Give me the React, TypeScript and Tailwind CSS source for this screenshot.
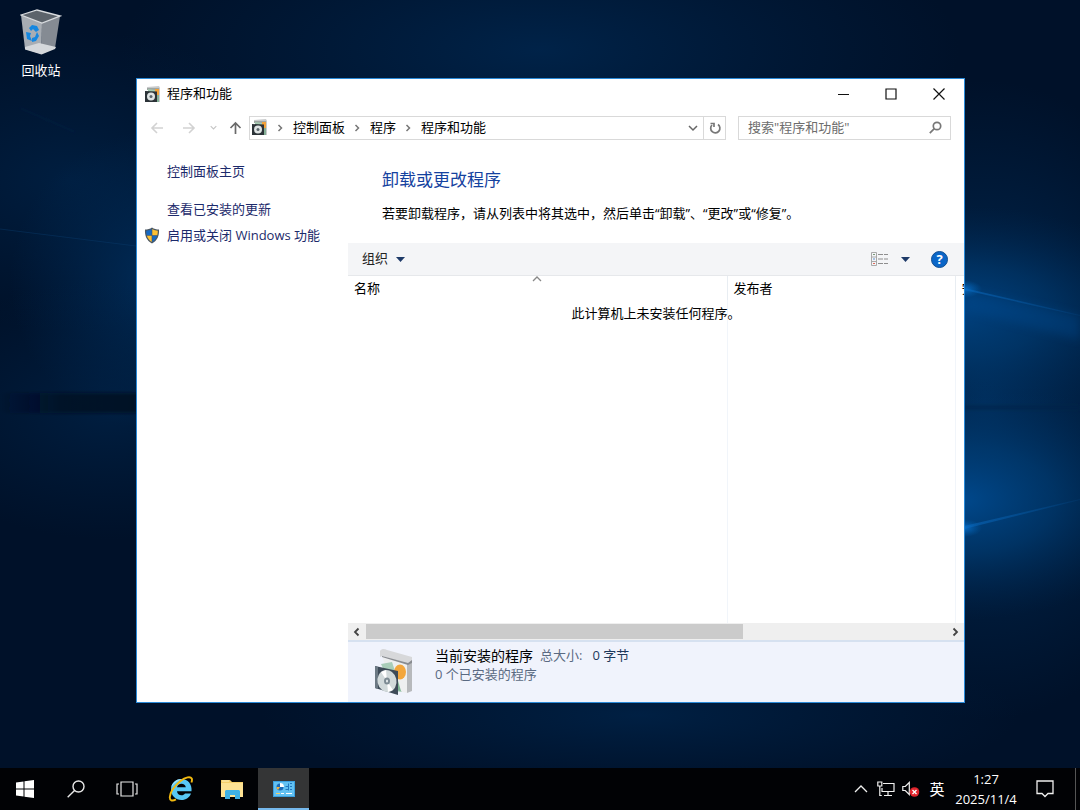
import React from "react";

const ui = "font-['Open_Sans','Noto_Sans_CJK_SC',sans-serif]";

const Wallpaper = () => (
    <svg className="absolute inset-0 w-full h-full" viewBox="0 0 1080 768" preserveAspectRatio="none" aria-hidden="true">
        <defs>
            <radialGradient id="glow">
                <stop offset="0" stopColor="#004f98" />
                <stop offset="0.45" stopColor="#00407a" stopOpacity="0.7" />
                <stop offset="1" stopColor="#002a55" stopOpacity="0" />
            </radialGradient>
            <radialGradient id="haze">
                <stop offset="0" stopColor="#003060" stopOpacity="0.95" />
                <stop offset="1" stopColor="#002a55" stopOpacity="0" />
            </radialGradient>
            <radialGradient id="flare">
                <stop offset="0" stopColor="#0a70cc" stopOpacity="0.9" />
                <stop offset="1" stopColor="#0060b0" stopOpacity="0" />
            </radialGradient>
            <linearGradient id="ray" x1="0" x2="1">
                <stop offset="0" stopColor="#0a68bc" stopOpacity="0.6" />
                <stop offset="1" stopColor="#0a68bc" stopOpacity="0.1" />
            </linearGradient>
            <linearGradient id="band" x1="0" x2="1">
                <stop offset="0" stopColor="#000d22" stopOpacity="0" />
                <stop offset="0.4" stopColor="#000d22" stopOpacity="0.75" />
                <stop offset="1" stopColor="#000d22" stopOpacity="0.85" />
            </linearGradient>
            <filter id="soft" x="-20%" y="-50%" width="140%" height="200%">
                <feGaussianBlur stdDeviation="5" />
            </filter>
            <filter id="edge" x="-5%" y="-50%" width="110%" height="200%">
                <feGaussianBlur stdDeviation="1.500" />
            </filter>
        </defs>
        <rect width="1080" height="768" fill="#001129" />
        <ellipse cx="540" cy="50" rx="420" ry="150" fill="url(#haze)" opacity="0.6" />
        <ellipse cx="70" cy="180" rx="240" ry="150" fill="url(#haze)" opacity="0.45" />
        <ellipse cx="160" cy="280" rx="150" ry="150" fill="url(#haze)" opacity="0.9" />
        <ellipse cx="110" cy="410" rx="210" ry="130" fill="url(#haze)" opacity="0.45" />
        <ellipse cx="640" cy="715" rx="380" ry="80" fill="url(#haze)" opacity="0.5" />
        <ellipse cx="985" cy="400" rx="230" ry="320" fill="url(#haze)" />
        <ellipse cx="950" cy="310" rx="230" ry="105" fill="url(#glow)" opacity="0.7" />
        <ellipse cx="960" cy="500" rx="210" ry="120" fill="url(#glow)" opacity="0.85" />
        <path d="M0 393H150V413H0z" fill="url(#band)" filter="url(#edge)" />
        <path d="M964 405H1080V410H964z" fill="#002247" opacity="0.5" filter="url(#edge)" />
        <path d="M964 290L1080 316V340L964 310z" fill="#00509a" opacity="0.3" filter="url(#soft)" />
        <path d="M964 288L1080 315V316L964 290z" fill="url(#ray)" />
        <path d="M964 526L1080 499V500L964 529z" fill="url(#ray)" />
        <path d="M0 229L136 246" stroke="#0a3f70" strokeOpacity="0.4" fill="none" />
        <path d="M20 108L75 132" stroke="#0a3560" strokeOpacity="0.3" fill="none" filter="url(#edge)" />
        <ellipse cx="964" cy="289" rx="18" ry="9" fill="url(#flare)" />
        <ellipse cx="964" cy="528" rx="18" ry="9" fill="url(#flare)" />
    </svg>
);

const RecycleBin = () => (
    <svg width="42" height="46" viewBox="0 0 42 46" aria-hidden="true">
        <path d="M1 6L17 1l23 6-18 7z" fill="#5c636b" />
        <path d="M1 6l21 8-.5 31L5 40z" fill="#a8adb3" />
        <path d="M40 7l-18 7-.5 31L35 39z" fill="#858b93" />
        <path d="M5 38l14-4 17 4-1 2-13.500 5.500L5 40.500z" fill="#d5d8db" />
        <path d="M1 6L17 1l23 6-18 7z" fill="none" stroke="#d9dcdf" strokeWidth="1.300" />
        <path d="M9 19l3-3 5 1 2 4-3 2-3-3-2 2zM6 23l5 1-1 3 2 5-5-2zM17 23l2 4-3 5-4 1v-4l3-1z" fill="#1587e0" />
    </svg>
);

const ProgramsIcon = ({ size = 17 }: { size?: number }) => (
    <svg width={size} height={size} viewBox="0 0 17 17" aria-hidden="true">
        <path d="M3 1l12-1 1 2v14h-4V4H3z" fill="#c9cbcc" />
        <path d="M3 2h12v2H3z" fill="#9fa6a3" />
        <path d="M4 3l7 1v5H4z" fill="#a4c9b0" />
        <path d="M11 3h4v7h-4z" fill="#f3a23a" />
        <path d="M13 9h2v7h-2z" fill="#84af96" />
        <path d="M1 5l12 .5v10.500L1 16z" fill="#2b3237" />
        <circle cx="7" cy="10.500" r="4" fill="#dfe4e4" />
        <circle cx="7" cy="10.500" r="1.500" fill="#5b666c" />
    </svg>
);

const ProgramsLargeIcon = () => (
    <svg width="42" height="48" viewBox="0 0 42 48" aria-hidden="true">
        <path d="M33 14h5v29l-5 2z" fill="#b7b9bc" />
        <path d="M8 8l25 6v31L20 42z" fill="#eeeff0" />
        <path d="M6 3c2-3 5-2 7-1l25 7v6l-4 1L8 8 6 9z" fill="#d7d8da" />
        <path d="M8 8l26 7 4-3v3l-4 2L8 9z" fill="#888b90" />
        <path d="M7 16l11-2 3 9v13l7 8-8-1z" fill="#a9cdb9" />
        <path d="M22 26l5 17-6-1z" fill="#7fb595" />
        <ellipse cx="26" cy="24" rx="6" ry="7.500" fill="#f3a63c" />
        <path d="M1 18l23 5v24L1 40z" fill="#3e4b58" />
        <path d="M1 18l3 1v22l-3-1z" fill="#6b7883" />
        <ellipse cx="13" cy="33" rx="9.500" ry="11" fill="#d2dadb" transform="rotate(-12 13 33)" />
        <path d="M13 33L7 24l5-2zM13 33l6 9-5 2z" fill="#fff" />
        <ellipse cx="13" cy="33" rx="3" ry="3.500" fill="#7d8b93" />
        <ellipse cx="13" cy="33" rx="1" ry="1.500" fill="#e7ecee" />
    </svg>
);

const Shield = () => (
    <svg width="16" height="17" viewBox="0 0 16 17" aria-hidden="true">
        <path d="M8 .5c2 1.500 4.500 2 7 2 .4 6-1.500 11-7 14C2.500 13.500.6 8.500 1 2.500c2.500 0 5-.5 7-2z" fill="#4b5763" />
        <path d="M7.700 2C6 3 4.200 3.500 2.200 3.700c0 1.600.1 3 .5 4.500h5z" fill="#1569c4" />
        <path d="M8.300 2c1.700 1 3.500 1.500 5.500 1.700 0 1.600-.1 3-.5 4.500h-5z" fill="#fdc033" />
        <path d="M7.700 8.800H2.900c.9 2.700 2.400 4.800 4.800 6.300z" fill="#fdc033" />
        <path d="M8.300 8.800h4.800c-.9 2.700-2.400 4.800-4.800 6.300z" fill="#1569c4" />
    </svg>
);

const Chevron = ({ d, size = 10, color = "#777", width = 1.5 }: { d: string; size?: number; color?: string; width?: number }) => (
    <svg width={size} height={size} viewBox="0 0 10 10" fill="none" stroke={color} strokeWidth={width} aria-hidden="true">
        <path d={d} />
    </svg>
);

const RIGHT = "M3.500 2l3 3-3 3";
const DOWN = "M1 3l4 4 4-4";

const Caret = () => (
    <svg width="9" height="5" viewBox="0 0 9 5" aria-hidden="true">
        <path d="M0 0h9L4.500 5z" fill="#1e3a68" />
    </svg>
);

const crumbs = ["控制面板", "程序", "程序和功能"];

const TitleBar = () => (
    <header className="flex h-[30px] items-center pl-[7px] pr-px">
        <ProgramsIcon />
        <h1 className="ml-1.5 flex-1 text-black">程序和功能</h1>
        <button aria-label="最小化" className="flex h-full w-12 items-center justify-center">
            <svg width="12" height="12" viewBox="0 0 12 12"><path d="M1 6.500h11" stroke="#111" /></svg>
        </button>
        <button aria-label="最大化" className="flex h-full w-12 items-center justify-center">
            <svg width="12" height="12" viewBox="0 0 12 12"><path d="M1 1h10v10H1z" fill="none" stroke="#111" strokeWidth="1.200" /></svg>
        </button>
        <button aria-label="关闭" className="flex h-full w-12 items-center justify-center">
            <svg width="12" height="12" viewBox="0 0 12 12"><path d="M.5.5l11 11m0-11l-11 11" stroke="#111" strokeWidth="1.200" /></svg>
        </button>
    </header>
);

const NavBar = () => (
    <nav className="flex h-[37px] items-center pl-3 pr-[13px]">
        <button aria-label="后退" className="flex w-4 justify-center">
            <svg width="14" height="12" viewBox="0 0 14 12" fill="none" stroke="#d2d2d2" strokeWidth="1.600"><path d="M13 6H2m5-5L2 6l5 5" /></svg>
        </button>
        <button aria-label="前进" className="ml-4 flex w-4 justify-center">
            <svg width="14" height="12" viewBox="0 0 14 12" fill="none" stroke="#d2d2d2" strokeWidth="1.600"><path d="M1 6h11M7 1l5 5-5 5" /></svg>
        </button>
        <button aria-label="最近浏览的位置" className="ml-2.5 flex w-3 justify-center">
            <Chevron d={DOWN} size={7} color="#c4c4c4" />
        </button>
        <button aria-label="向上" className="ml-2 flex w-4 justify-center">
            <svg width="13" height="14" viewBox="0 0 13 14" fill="none" stroke="#6a6a6a" strokeWidth="1.700"><path d="M6.500 13V2M1.500 7l5-5 5 5" /></svg>
        </button>
        <div className="ml-1.5 flex h-6 flex-1 items-stretch border border-[#d9d9d9] text-black">
            <ol className="flex flex-1 items-center pl-px">
                <li className="flex"><ProgramsIcon /></li>
                {crumbs.map((name) => (
                    <li key={name} className="flex items-center">
                        <span className="ml-[7px] mr-2 flex"><Chevron d={RIGHT} /></span>
                        <a href="#">{name}</a>
                    </li>
                ))}
            </ol>
            <button aria-label="以前的位置" className="flex w-5 items-center justify-center">
                <Chevron d={DOWN} color="#666" />
            </button>
            <button aria-label="刷新" className="flex w-[22px] items-center justify-center border-l border-[#d9d9d9]">
                <svg width="12" height="12" viewBox="0 0 12 12" fill="none" stroke="#777" strokeWidth="1.700">
                    <path d="M9 2.500A4.600 4.600 0 1 1 3 3" />
                    <path d="M1.500 1.500h3.500V5" />
                </svg>
            </button>
        </div>
        <label className="ml-3 flex h-6 w-[213px] items-center border border-[#d9d9d9] pl-[9px] pr-2">
            <input type="search" aria-label="搜索" placeholder={'搜索"程序和功能"'} className="min-w-0 flex-1 outline-none placeholder:text-[#6d6d6d]" />
            <svg width="13" height="13" viewBox="0 0 13 13" fill="none" stroke="#777" strokeWidth="1.700" aria-hidden="true">
                <circle cx="8" cy="5" r="3.700" />
                <path d="M5.300 7.700L.8 12.200" />
            </svg>
        </label>
    </nav>
);

const Sidebar = () => (
    <aside className="flex w-[211px] shrink-0 flex-col pt-4 text-[#1c2a6b]">
        <a href="#" className="pl-[30px] leading-[18px]">控制面板主页</a>
        <a href="#" className="mt-5 pl-[30px] leading-[18px]">查看已安装的更新</a>
        <a href="#" className="mt-2 flex items-center gap-[7px] pl-[7px] leading-[18px]">
            <Shield />
            启用或关闭 Windows 功能
        </a>
    </aside>
);

const Toolbar = () => (
    <div className="flex h-[33px] items-center border-b border-[#e6e8eb] bg-[#f4f5f7] pl-3.5 pr-4 text-[#222]">
        <button className="flex items-center gap-2">
            组织
            <Caret />
        </button>
        <button aria-label="更改视图" className="ml-auto">
            <svg width="18" height="14" viewBox="0 0 18 14" fill="none">
                <path d="M.5.5h5v13h-5zM.5 5h5M.5 9.500h5" stroke="#a9a9a9" />
                <path d="M7 2.500h5m1 0h4M7 7h5m1 0h4M7 11.500h5m1 0h4" stroke="#8e8e8e" />
                <path d="M2 2h2v1H2z" fill="#7a9a7a" />
                <path d="M2 6.500h2v1H2z" fill="#5b8fd0" />
                <path d="M2 11h2v1H2z" fill="#e06a5a" />
            </svg>
        </button>
        <button aria-label="更多选项" className="ml-3">
            <Caret />
        </button>
        <button aria-label="帮助" className="ml-[21px] flex size-[17px] items-center justify-center rounded-full border border-[#124f92] bg-[#0a66c8] font-bold leading-none text-white">
            ?
        </button>
    </div>
);

const ProgramList = () => (
    <div className="relative min-h-0 flex-1 overflow-hidden">
        <table className="h-full w-[940px] table-fixed border-collapse text-left text-black">
            <thead>
                <tr className="h-6 leading-[18px]">
                    <th aria-sort="ascending" className="relative w-[379px] border-r border-[#e8edf2] pl-1.5 font-normal">
                        名称
                        <span className="absolute inset-x-0 top-0 flex justify-center">
                            <svg width="10" height="6" viewBox="0 0 10 6" fill="none" stroke="#888" strokeWidth="1.300"><path d="M1 5l4-4 4 4" /></svg>
                        </span>
                    </th>
                    <th className="w-[228px] border-r border-[#e8edf2] pl-1.5 font-normal">发布者</th>
                    <th className="pl-1.5 font-normal">安</th>
                </tr>
            </thead>
            <tbody>
                <tr>
                    <td className="border-r border-[#f1f5fa]" />
                    <td className="border-r border-[#f1f5fa]" />
                    <td />
                </tr>
            </tbody>
        </table>
        <p className="absolute inset-x-0 top-7 text-center leading-[18px] text-black">此计算机上未安装任何程序。</p>
    </div>
);

const ScrollBar = () => (
    <div className="flex h-[17px] items-stretch bg-[#efefef]">
        <button aria-label="向左滚动" className="flex w-[18px] items-center justify-center">
            <Chevron d="M6.500 1.500L3 5l3.500 3.500" color="#444" width={1.8} />
        </button>
        <div className="flex flex-1">
            <div className="my-px w-[65%] bg-[#cbcbcb]" />
        </div>
        <button aria-label="向右滚动" className="flex w-[18px] items-center justify-center">
            <Chevron d="M3.500 1.500L7 5 3.500 8.500" color="#444" width={1.8} />
        </button>
    </div>
);

const DetailsPane = () => (
    <footer className="flex h-[62px] items-start border-t-2 border-[#d6e1f0] bg-[#f0f3fc] pl-[26px] pt-1">
        <span className="mt-0.5"><ProgramsLargeIcon /></span>
        <div className="ml-[19px] leading-[19px] text-[#5a6a82]">
            <p className="flex">
                <strong className="text-[14px] font-normal text-black">当前安装的程序</strong>
                <span className="ml-[7px]">总大小:</span>
                <span className="ml-2.5 text-[#1e395b]">0 字节</span>
            </p>
            <p>0 个已安装的程序</p>
        </div>
    </footer>
);

const ProgramsWindow = () => (
    <section className="absolute bottom-[65px] left-[136px] right-[115px] top-[78px] flex flex-col border border-[#2a8ad8] bg-white">
        <TitleBar />
        <NavBar />
        <div className="flex min-h-0 flex-1">
            <Sidebar />
            <main className="flex min-w-0 flex-1 flex-col">
                <div className="h-[97px] shrink-0 pl-[34px] pt-[22px] text-black">
                    <h2 className="text-[17px] leading-6 text-[#15429f]">卸载或更改程序</h2>
                    <p className="mt-3 leading-[18px]">若要卸载程序，请从列表中将其选中，然后单击“卸载”、“更改”或“修复”。</p>
                </div>
                <Toolbar />
                <ProgramList />
                <ScrollBar />
                <DetailsPane />
            </main>
        </div>
    </section>
);

const taskButton = "flex w-[51px] items-center justify-center";

const Taskbar = () => (
    <footer className="flex h-[42px] shrink-0 items-stretch bg-[#010205] text-white">
        <button aria-label="开始" className="flex w-[50px] items-center justify-center">
            <svg width="18" height="18" viewBox="0 0 18 18" fill="#fff"><path d="M0 2.500l7.500-1v7H0zM8.500 1.300L18 0v8.500H8.500zM0 9.500h7.500v7l-7.500-1zM8.500 9.500H18V18l-9.500-1.300z" /></svg>
        </button>
        <button aria-label="搜索" className={taskButton}>
            <svg width="18" height="18" viewBox="0 0 18 18" fill="none" stroke="#e8e8e8" strokeWidth="1.400"><circle cx="11.500" cy="6.500" r="5.500" /><path d="M7.500 10.500L.7 17.300" /></svg>
        </button>
        <button aria-label="任务视图" className={taskButton}>
            <svg width="22" height="16" viewBox="0 0 22 16" fill="none" stroke="#e8e8e8" strokeWidth="1.200"><path d="M5 1h12v14H5zM3 3H1v10h2M19 3h2v10h-2" /></svg>
        </button>
        <button aria-label="Internet Explorer" className={`${taskButton} ml-[3px]`}>
            <svg width="26" height="26" viewBox="0 0 26 26" fill="none">
                <path d="M13.500 3C7.500 3 3 7.500 3 13.500S7.500 24 13.500 24c4.500 0 8-2.500 9.500-6.500h-6c-.8 1.200-2 1.800-3.500 1.800-2.500 0-4.200-1.500-4.500-4h14.500C24.300 8.500 20 3 13.500 3zM9 11.300c.5-2.200 2.200-3.500 4.500-3.500s4 1.300 4.300 3.500z" fill="#58c8f5" />
                <path d="M13.500 3C8.500 3 4.500 6.300 3.300 11c3-4 7-6.500 11.700-7.900z" fill="#a2e4fb" />
                <path d="M8 23.300C4 25.500 1.500 24.500 1.800 21 2.300 16 7 9.500 12.500 5 17.500 1 22.500.3 23.700 2.500c.5 1 .3 2.500-.3 4" stroke="#f2b90f" strokeWidth="1.900" />
            </svg>
        </button>
        <button aria-label="文件资源管理器" className={taskButton}>
            <svg width="24" height="20" viewBox="0 0 24 20">
                <path d="M1 1h9l2 2h11v15H1z" fill="#f5cf6a" />
                <path d="M1 4h22v14H1z" fill="#fde293" />
                <path d="M2 1.500h7v1H2z" fill="#fff1bd" />
                <path d="M5 20v-8l1-1h13l1 1v8h-5v-4h-5v4z" fill="#3fb1e4" />
            </svg>
        </button>
        <button aria-label="程序和功能" className={`${taskButton} ml-px border-b-2 border-[#76b9ed] bg-[#343536] pt-0.5`}>
            <svg width="22" height="16" viewBox="0 0 22 16">
                <path d="M0 0h22v16H0z" fill="#3a9fdf" />
                <path d="M1 1h20v14H1z" fill="#62c1f2" />
                <circle cx="7" cy="6" r="3.500" fill="#1a6ab8" />
                <path d="M7 6V2a4 4 0 0 1 4 4z" fill="#fff" />
                <path d="M7 6H3.500A3.500 3.500 0 0 0 5 9z" fill="#f3b43c" />
                <path d="M12.500 5.500h3m1.500-3h2m-2 3h2m-2 3h2M12.500 8.500h3m0-6v7" stroke="#2077bf" fill="none" />
                <path d="M3 12.500h4" stroke="#f5d06a" />
                <path d="M8 12.500h3m2 0h6" stroke="#fff" />
            </svg>
        </button>

        <div className="ml-auto flex items-center">
            <button aria-label="显示隐藏的图标" className="flex w-6 justify-center">
                <svg width="14" height="8" viewBox="0 0 14 8" fill="none" stroke="#f0f0f0" strokeWidth="1.300"><path d="M1 7l6-6 6 6" /></svg>
            </button>
            <button aria-label="网络" className="flex w-[26px] justify-center">
                <svg width="18" height="16" viewBox="0 0 18 16" fill="none" stroke="#f0f0f0" strokeWidth="1.200"><path d="M6 2.500h11v8H5V7M11 10.500v4M7 14.500h8M.8 1h4v4h-4zM2.800 5v9.500h2" /></svg>
            </button>
            <button aria-label="音量" className="flex w-6 justify-center">
                <svg width="18" height="16" viewBox="0 0 18 16" fill="none">
                    <path d="M.8 5.500h2.500l4-4v12l-4-4H.8z" stroke="#f0f0f0" strokeWidth="1.200" />
                    <circle cx="12.500" cy="11" r="4.800" fill="#e0242c" />
                    <path d="M10.500 9l4 4m0-4l-4 4" stroke="#fff" strokeWidth="1.300" />
                </svg>
            </button>
            <button aria-label="输入法" className="w-7 text-center text-[15px]">英</button>
            <button className="w-[70px] text-center text-[13px] leading-5">
                <time>1:27<br />2025/11/4</time>
            </button>
            <button aria-label="操作中心" className="ml-3 flex w-6 justify-center">
                <svg width="18" height="18" viewBox="0 0 18 18" fill="none" stroke="#f0f0f0" strokeWidth="1.300"><path d="M1 1h16v12.500h-5L9 16.500l-3-3H1z" /></svg>
            </button>
            <button aria-label="显示桌面" className="ml-[18px] h-[42px] w-[5px] border-l border-[#555]" />
        </div>
    </footer>
);

export default function App() {
    return (
        <div lang="zh-CN" className={`${ui} flex h-screen flex-col overflow-hidden text-[13px]`}>
            <div className="relative min-h-0 flex-1 overflow-hidden">
                <Wallpaper />
                <button className="absolute left-0 top-[9px] flex w-[82px] flex-col items-center gap-1.5 leading-[18px] text-white">
                    <RecycleBin />
                    回收站
                </button>
                <ProgramsWindow />
            </div>
            <Taskbar />
        </div>
    );
}
